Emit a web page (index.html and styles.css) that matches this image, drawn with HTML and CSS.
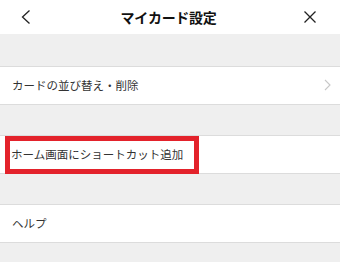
FILE: index.html
```html
<!DOCTYPE html>
<html lang="ja">
<head>
    <meta charset="UTF-8">
    <meta name="viewport" content="width=device-width, initial-scale=1.0">
    <title>マイカード設定</title>
    <link rel="stylesheet" href="styles.css">
</head>
<body>
    <div class="header">
        <button class="icon-btn back" aria-label="戻る">
            <svg width="12" height="16" viewBox="0 0 12 16"><path d="M9.5 1.5 L2.5 8 L9.5 14.5" fill="none" stroke="#222" stroke-width="1.3"/></svg>
        </button>
        <h1>マイカード設定</h1>
        <button class="icon-btn close" aria-label="閉じる">
            <svg width="14" height="14" viewBox="0 0 14 14"><path d="M1.5 1.5 L12.5 12.5 M12.5 1.5 L1.5 12.5" fill="none" stroke="#222" stroke-width="1.3"/></svg>
        </button>
    </div>

    <div class="spacer first"></div>
    <div class="row">
        <span class="row-text">カードの並び替え・削除</span>
        <svg class="chevron" width="7" height="12" viewBox="0 0 7 12"><path d="M1 1 L6 6 L1 11" fill="none" stroke="#c8c8c8" stroke-width="1.1"/></svg>
    </div>

    <div class="spacer"></div>
    <div class="row">
        <span class="row-text tight">ホーム画面にショートカット追加</span>
        <div class="highlight"></div>
    </div>

    <div class="spacer"></div>
    <div class="row">
        <span class="row-text">ヘルプ</span>
    </div>
    <div class="spacer"></div>
</body>
</html>
```

FILE: styles.css
```css
* {
    margin: 0;
    padding: 0;
    box-sizing: border-box;
}

body {
    font-family: "Noto Sans CJK JP", "Noto Sans", sans-serif;
    background: #efefef;
    color: #222;
    width: 340px;
    height: 262px;
    overflow: hidden;
}

.header {
    height: 34px;
    background: white;
    display: flex;
    align-items: center;
    justify-content: space-between;
    padding: 0 23px 0 20px;
}

.header h1 {
    font-size: 14px;
    font-weight: bold;
    color: #111;
    letter-spacing: -0.3px;
}

.icon-btn {
    background: none;
    border: none;
    display: flex;
    align-items: center;
    width: 16px;
}

.icon-btn.close {
    justify-content: flex-end;
}

.spacer {
    height: 30px;
}

.spacer.first {
    height: 32px;
}

.row {
    position: relative;
    height: 39px;
    background: white;
    border-top: 1px solid #dcdcdc;
    border-bottom: 1px solid #dcdcdc;
    display: flex;
    align-items: center;
    justify-content: space-between;
    padding: 0 9px 1px 12px;
}

.row-text {
    font-size: 11.5px;
    color: #333;
}

.row-text.tight {
    margin-left: -1px;
}

.chevron {
    display: block;
}

.highlight {
    position: absolute;
    left: 5px;
    top: 0;
    width: 194px;
    height: 38px;
    border: 5px solid #e3222b;
}
```
